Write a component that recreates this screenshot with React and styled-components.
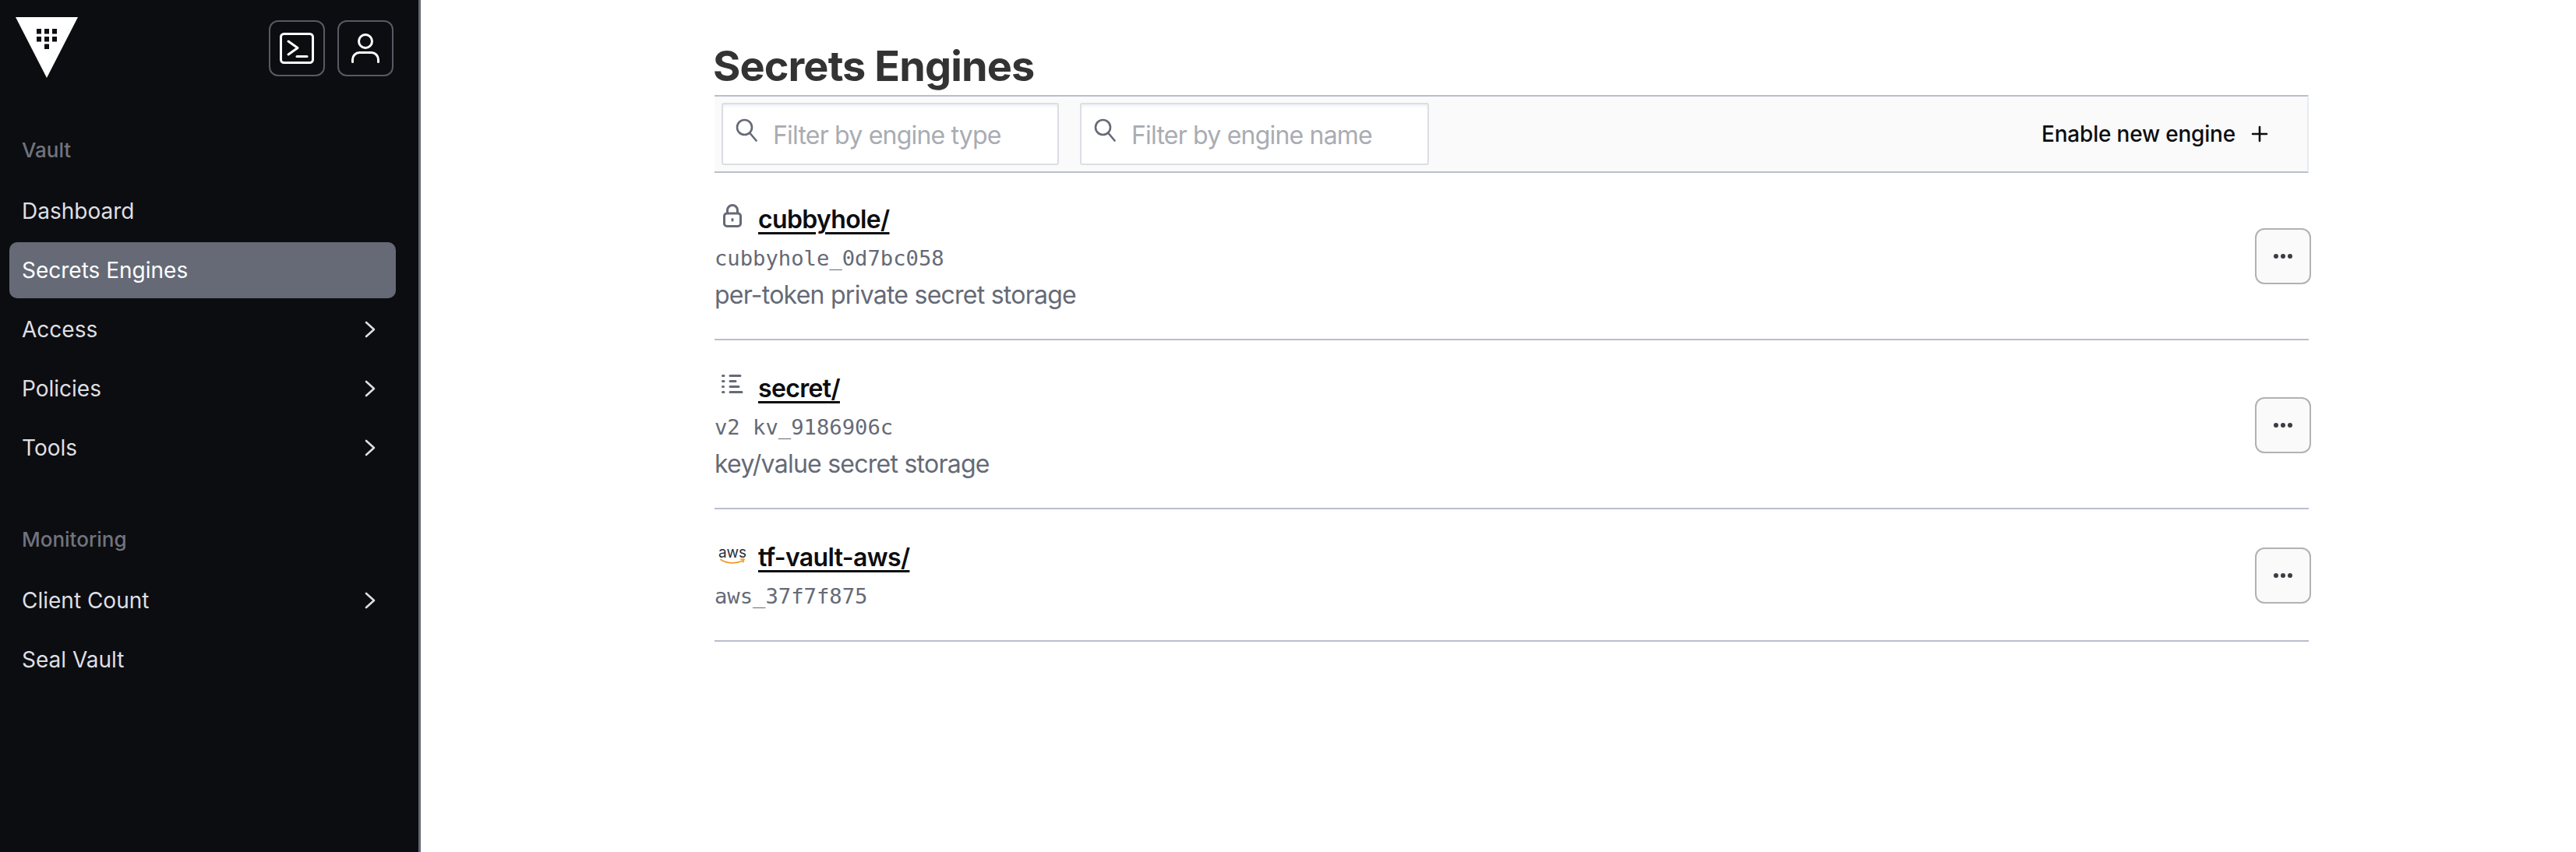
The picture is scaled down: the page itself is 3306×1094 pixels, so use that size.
import React from "react";
import styled, { createGlobalStyle } from "styled-components";

const GlobalStyle = createGlobalStyle`
  html, body {
    margin: 0;
    padding: 0;
    background: #fff;
    font-family: Inter, "Liberation Sans", sans-serif;
  }
  * {
    box-sizing: border-box;
  }
`;

const Page = styled.div`
  display: flex;
  height: 1094px;
  overflow: hidden;
`;

const Sidebar = styled.aside`
  flex: 0 0 540px;
  background: #0c0d10;
  border-right: 3px solid #656a76;
`;

const SidebarHeader = styled.div`
  display: flex;
  justify-content: space-between;
  align-items: flex-start;
  padding: 22px 32px 0 20px;
  margin-bottom: 77px;
`;

const HeaderButtons = styled.div`
  display: flex;
  gap: 16px;
  margin-top: 4px;
`;

const IconButton = styled.div`
  display: flex;
  align-items: center;
  justify-content: center;
  width: 72px;
  height: 72px;
  border: 2px solid #565a64;
  border-radius: 12px;
`;

const Nav = styled.nav`
  display: flex;
  flex-direction: column;
  gap: 4px;
  padding: 0 29px 0 12px;
`;

const NavLabel = styled.div`
  height: 32px;
  line-height: 32px;
  padding-left: 16px;
  margin-bottom: 22px;
  margin-top: ${(props) => (props.$spaced ? "62px" : "0")};
  font-size: 26px;
  font-weight: 500;
  color: #70747f;
`;

const NavItem = styled.div`
  display: flex;
  align-items: center;
  justify-content: space-between;
  height: 72px;
  padding: 0 26px 0 16px;
  border-radius: 10px;
  font-size: 28px;
  color: ${(props) => (props.$active ? "#fff" : "#dedfe3")};
  background: ${(props) => (props.$active ? "#656a76" : "transparent")};
`;

const Main = styled.main`
  flex: 1;
  padding: 52px 0 0 377px;
`;

const Content = styled.div`
  width: 2046px;
`;

const Title = styled.h1`
  margin: 0 0 4px -2px;
  font-size: 54px;
  line-height: 66px;
  font-weight: 700;
  letter-spacing: -0.9px;
  color: #333;
`;

const Toolbar = styled.div`
  display: flex;
  align-items: center;
  height: 100px;
  padding-left: 9px;
  margin-bottom: -2px;
  gap: 27px;
  background: #fafafa;
  border-top: 2px solid #babecd;
  border-bottom: 2px solid #babecd;
  border-right: 2px solid #e8ebf0;
`;

const Field = styled.label`
  display: flex;
  align-items: flex-start;
  width: ${(props) => props.$width}px;
  height: 80px;
  padding: 18px 0 0 16px;
  background: #fff;
  border: 2px solid #dcdee4;
  border-radius: 3px;
  box-shadow: inset 0 4px 4px -2px #eceef1;
`;

const FieldInput = styled.input`
  flex: 1;
  min-width: 0;
  height: 42px;
  margin: 0 0 0 20px;
  padding: 0;
  border: 0;
  outline: 0;
  background: transparent;
  font-family: inherit;
  font-size: 32px;
  letter-spacing: -0.8px;
  color: #333;

  &::placeholder {
    color: #a9acb3;
    opacity: 1;
  }
`;

const EnableButton = styled.div`
  display: flex;
  align-items: center;
  gap: 20px;
  margin-left: auto;
  padding-right: 50px;
  font-size: 28px;
  font-weight: 500;
  letter-spacing: -0.2px;
  color: #0c0d10;
`;

const Row = styled.div`
  display: flex;
  align-items: center;
  justify-content: space-between;
  padding: 38px 0 36px;
  border-bottom: 2px solid #babecd;
`;

const RowText = styled.div`
  display: flex;
  flex-direction: column;
`;

const NameLine = styled.div`
  display: flex;
  align-items: center;
  gap: 10px;
  height: 48px;
`;

const IconSlot = styled.div`
  display: flex;
  flex-direction: column;
  align-items: center;
  justify-content: center;
  width: 46px;
  height: 32px;
  margin-top: ${(props) => props.$shift}px;
  color: #656a76;
`;

const EngineName = styled.a`
  font-size: 32px;
  font-weight: 600;
  line-height: 48px;
  letter-spacing: -0.65px;
  color: #0c0d10;
  text-decoration: underline;
  text-decoration-thickness: 3px;
  text-underline-offset: 5px;
`;

const Accessor = styled.div`
  margin-top: 6px;
  height: 40px;
  line-height: 40px;
  font-family: "DejaVu Sans Mono", "Liberation Mono", monospace;
  font-size: 27.2px;
  white-space: pre;
  color: #656a76;
`;

const Description = styled.div`
  margin-top: 7px;
  height: 40px;
  line-height: 40px;
  font-size: 32px;
  letter-spacing: -0.75px;
  color: #656a76;
`;

const MenuButton = styled.div`
  display: flex;
  align-items: center;
  justify-content: center;
  gap: 3px;
  width: 72px;
  height: 72px;
  margin-right: -3px;
  background: #fafafa;
  border: 2px solid #b2b2b2;
  border-radius: 12px;
`;

const Dot = styled.span`
  width: 6px;
  height: 6px;
  border-radius: 50%;
  background: #3b3d45;
`;

const AwsText = styled.span`
  font-size: 19px;
  line-height: 15px;
  color: #252f3e;
`;

const VaultLogo = () => (
  <svg width="80" height="78" viewBox="0 0 80 78">
    <path d="M0 0H80L40 78Z" fill="#fff" />
    <g fill="#0c0d10">
      <rect x="27" y="15" width="6" height="6.5" />
      <rect x="37" y="15" width="6" height="6.5" />
      <rect x="47" y="15" width="6" height="6.5" />
      <rect x="27" y="25" width="6" height="6.5" />
      <rect x="37" y="25" width="6" height="6.5" />
      <rect x="47" y="25" width="6" height="6.5" />
      <rect x="37" y="34.5" width="6" height="6.5" />
    </g>
  </svg>
);

const TerminalIcon = () => (
  <svg width="44" height="40" viewBox="0 0 44 40" fill="none" stroke="#fff" strokeWidth="3" strokeLinecap="round" strokeLinejoin="round">
    <rect x="1.5" y="1.5" width="41" height="37" rx="4" />
    <path d="M11 11l12 8.5L11 28" />
    <path d="M22 30.5h13" />
  </svg>
);

const UserIcon = () => (
  <svg width="36" height="38" viewBox="0 0 36 38" fill="none" stroke="#fff" strokeWidth="3" strokeLinecap="round">
    <circle cx="18" cy="10" r="8.5" />
    <path d="M1.5 36.5v-3a9 9 0 0 1 9-9h15a9 9 0 0 1 9 9v3" />
  </svg>
);

const Chevron = () => (
  <svg width="14" height="22" viewBox="0 0 14 22" fill="none" stroke="#dedfe3" strokeWidth="2.6" strokeLinecap="round" strokeLinejoin="round">
    <path d="M2 2l10 9-10 9" />
  </svg>
);

const SearchIcon = () => (
  <svg width="28" height="30" viewBox="0 0 28 30" fill="none" stroke="#656a76" strokeWidth="2.6" strokeLinecap="round">
    <circle cx="11.5" cy="11.5" r="9.5" />
    <path d="M18.5 19l8 9.5" />
  </svg>
);

const PlusIcon = () => (
  <svg width="22" height="22" viewBox="0 0 22 22" stroke="#0c0d10" strokeWidth="2.6" strokeLinecap="round">
    <path d="M11 2v18M2 11h18" />
  </svg>
);

const LockIcon = () => (
  <svg width="24" height="30" viewBox="0 0 24 30" fill="none" stroke="#656a76" strokeWidth="3">
    <path d="M5.5 12V8a6.5 6.5 0 0 1 13 0v4" />
    <rect x="1.5" y="12" width="21" height="16.5" rx="3.5" />
    <rect x="10.5" y="18" width="3" height="4.5" rx="1.5" fill="#656a76" stroke="none" />
  </svg>
);

const ListIcon = () => (
  <svg width="28" height="24" viewBox="0 0 28 24" fill="none" stroke="#656a76" strokeWidth="3" strokeLinecap="round">
    <path d="M1.5 1.5h1.5M1.5 8.5h1.5M1.5 15.5h1M1.5 22.5h1.5" />
    <path d="M11 1.5h13M11 8.5h7M11 15.5h11M11 22.5h15" />
  </svg>
);

const AwsSmile = () => (
  <svg width="32" height="8" viewBox="0 0 32 8" fill="none">
    <path d="M1 1.5c8 5.5 20 5.5 28 1.5" stroke="#f29a26" strokeWidth="1.8" strokeLinecap="round" />
    <path d="M26.5 1h4.5l-1.5 4" stroke="#f29a26" strokeWidth="1.5" strokeLinecap="round" strokeLinejoin="round" />
  </svg>
);

const AwsIcon = () => (
  <>
    <AwsText>aws</AwsText>
    <AwsSmile />
  </>
);

const engines = [
  {
    name: "cubbyhole/",
    accessor: "cubbyhole_0d7bc058",
    description: "per-token private secret storage",
    icon: <LockIcon />,
    shift: -10,
  },
  {
    name: "secret/",
    accessor: "v2 kv_9186906c",
    description: "key/value secret storage",
    icon: <ListIcon />,
    shift: -12,
  },
  {
    name: "tf-vault-aws/",
    accessor: "aws_37f7f875",
    icon: <AwsIcon />,
    shift: -6,
  },
];

const App = () => {
  return (
    <>
      <GlobalStyle />
      <Page>
        <Sidebar>
          <SidebarHeader>
            <VaultLogo />
            <HeaderButtons>
              <IconButton>
                <TerminalIcon />
              </IconButton>
              <IconButton>
                <UserIcon />
              </IconButton>
            </HeaderButtons>
          </SidebarHeader>
          <Nav>
            <NavLabel>Vault</NavLabel>
            <NavItem>Dashboard</NavItem>
            <NavItem $active>Secrets Engines</NavItem>
            <NavItem>
              Access
              <Chevron />
            </NavItem>
            <NavItem>
              Policies
              <Chevron />
            </NavItem>
            <NavItem>
              Tools
              <Chevron />
            </NavItem>
            <NavLabel $spaced>Monitoring</NavLabel>
            <NavItem>
              Client Count
              <Chevron />
            </NavItem>
            <NavItem>Seal Vault</NavItem>
          </Nav>
        </Sidebar>
        <Main>
          <Content>
            <Title>Secrets Engines</Title>
            <Toolbar>
              <Field $width={433}>
                <SearchIcon />
                <FieldInput placeholder="Filter by engine type" />
              </Field>
              <Field $width={448}>
                <SearchIcon />
                <FieldInput placeholder="Filter by engine name" />
              </Field>
              <EnableButton>
                Enable new engine
                <PlusIcon />
              </EnableButton>
            </Toolbar>
            {engines.map((engine) => (
              <Row key={engine.name}>
                <RowText>
                  <NameLine>
                    <IconSlot $shift={engine.shift}>{engine.icon}</IconSlot>
                    <EngineName>{engine.name}</EngineName>
                  </NameLine>
                  <Accessor>{engine.accessor}</Accessor>
                  {engine.description && <Description>{engine.description}</Description>}
                </RowText>
                <MenuButton>
                  <Dot />
                  <Dot />
                  <Dot />
                </MenuButton>
              </Row>
            ))}
          </Content>
        </Main>
      </Page>
    </>
  );
};

export default App;
